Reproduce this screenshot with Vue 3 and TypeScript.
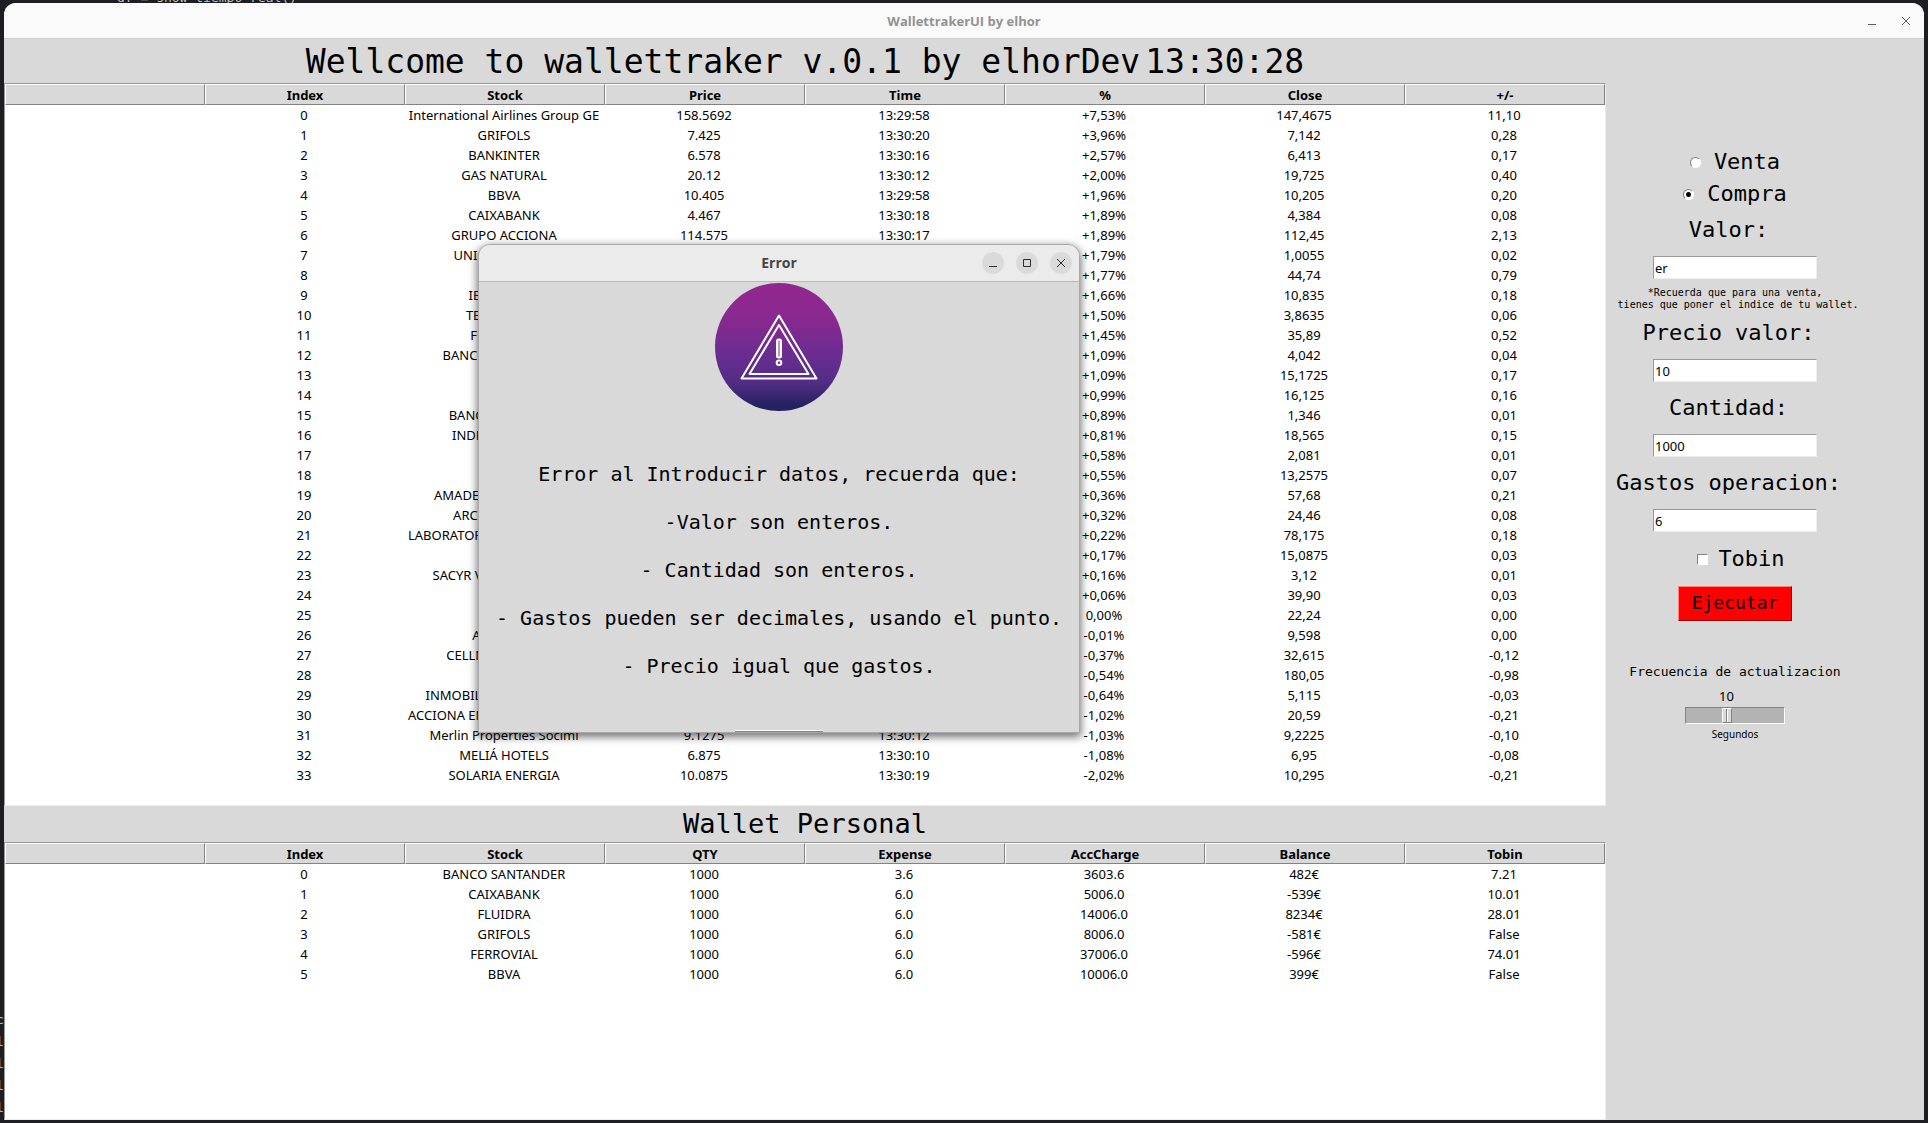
<script setup lang="ts">
import { ref } from 'vue'

const operation = ref<'venta' | 'compra'>('compra')
const stock = ref('er')
const price = ref('10')
const quantity = ref('1000')
const expenses = ref('6')
const tobin = ref(false)
const frequency = ref(10)

const marketColumns = ['', 'Index', 'Stock', 'Price', 'Time', '%', 'Close', '+/-']
const walletColumns = ['', 'Index', 'Stock', 'QTY', 'Expense', 'AccCharge', 'Balance', 'Tobin']

const market: string[][] = [
  ['International Airlines Group GE', '158.5692', '13:29:58', '+7,53%', '147,4675', '11,10'],
  ['GRIFOLS', '7.425', '13:30:20', '+3,96%', '7,142', '0,28'],
  ['BANKINTER', '6.578', '13:30:16', '+2,57%', '6,413', '0,17'],
  ['GAS NATURAL', '20.12', '13:30:12', '+2,00%', '19,725', '0,40'],
  ['BBVA', '10.405', '13:29:58', '+1,96%', '10,205', '0,20'],
  ['CAIXABANK', '4.467', '13:30:18', '+1,89%', '4,384', '0,08'],
  ['GRUPO ACCIONA', '114.575', '13:30:17', '+1,89%', '112,45', '2,13'],
  ['UNICAJA BANCO', '', '', '+1,79%', '1,0055', '0,02'],
  ['', '', '', '+1,77%', '44,74', '0,79'],
  ['IBERDROLA', '', '', '+1,66%', '10,835', '0,18'],
  ['TELEFONICA', '', '', '+1,50%', '3,8635', '0,06'],
  ['FERROVIAL', '', '', '+1,45%', '35,89', '0,52'],
  ['BANCO SANTANDER', '', '', '+1,09%', '4,042', '0,04'],
  ['', '', '', '+1,09%', '15,1725', '0,17'],
  ['', '', '', '+0,99%', '16,125', '0,16'],
  ['BANCO SABADELL', '', '', '+0,89%', '1,346', '0,01'],
  ['INDRA SISTEMAS', '', '', '+0,81%', '18,565', '0,15'],
  ['', '', '', '+0,58%', '2,081', '0,01'],
  ['', '', '', '+0,55%', '13,2575', '0,07'],
  ['AMADEUS IT HOLDING', '', '', '+0,36%', '57,68', '0,21'],
  ['ARCELORMITTAL', '', '', '+0,32%', '24,46', '0,08'],
  ['LABORATORIOS FARMACEUTICOS', '', '', '+0,22%', '78,175', '0,18'],
  ['', '', '', '+0,17%', '15,0875', '0,03'],
  ['SACYR VALLEHERMOSO', '', '', '+0,16%', '3,12', '0,01'],
  ['', '', '', '+0,06%', '39,90', '0,03'],
  ['FLUIDRA', '', '', '0,00%', '22,24', '0,00'],
  ['ACERINOX', '', '', '-0,01%', '9,598', '0,00'],
  ['CELLNEX TELECOM', '', '', '-0,37%', '32,615', '-0,12'],
  ['', '', '', '-0,54%', '180,05', '-0,98'],
  ['INMOBILIARIA COLONIAL', '', '', '-0,64%', '5,115', '-0,03'],
  ['ACCIONA ENERGIAS RENOVABLES', '', '', '-1,02%', '20,59', '-0,21'],
  ['Merlin Properties Socimi', '9.1275', '13:30:12', '-1,03%', '9,2225', '-0,10'],
  ['MELIÁ HOTELS', '6.875', '13:30:10', '-1,08%', '6,95', '-0,08'],
  ['SOLARIA ENERGIA', '10.0875', '13:30:19', '-2,02%', '10,295', '-0,21'],
]

const wallet: string[][] = [
  ['BANCO SANTANDER', '1000', '3.6', '3603.6', '482€', '7.21'],
  ['CAIXABANK', '1000', '6.0', '5006.0', '-539€', '10.01'],
  ['FLUIDRA', '1000', '6.0', '14006.0', '8234€', '28.01'],
  ['GRIFOLS', '1000', '6.0', '8006.0', '-581€', 'False'],
  ['FERROVIAL', '1000', '6.0', '37006.0', '-596€', '74.01'],
  ['BBVA', '1000', '6.0', '10006.0', '399€', 'False'],
]

const messages = [
  'Error al Introducir datos, recuerda que:',
  '-Valor son enteros.',
  '- Cantidad son enteros.',
  '- Gastos pueden ser decimales, usando el punto.',
  '- Precio igual que gastos.',
]
</script>

<template>
  <div class="desktop">
    <div class="editor-line" aria-hidden="true">df = show_tiempo_real()</div>
    <div class="terminal" aria-hidden="true">
      <span>c</span><span>l</span><span>l</span><span>l</span><span>l</span>
    </div>

    <div class="window">
      <header class="titlebar">
        <span class="title">WallettrakerUI by elhor</span>
        <div class="controls">
          <button type="button" aria-label="Minimizar">
            <svg width="10" height="10" viewBox="0 0 10 10"><path d="M1 8.5h8" /></svg>
          </button>
          <button type="button" aria-label="Cerrar">
            <svg width="10" height="10" viewBox="0 0 10 10"><path d="M1 1l8 8M9 1l-8 8" /></svg>
          </button>
        </div>
      </header>

      <div class="body">
        <main class="main">
          <h1 class="heading">
            <span>Wellcome to wallettraker v.0.1 by elhorDev</span>
            <time>13:30:28</time>
          </h1>

          <div class="tree market">
            <table>
              <thead>
                <tr><th v-for="c in marketColumns" :key="c">{{ c }}</th></tr>
              </thead>
              <tbody>
                <tr v-for="(row, i) in market" :key="i">
                  <td></td>
                  <td>{{ i }}</td>
                  <td v-for="(cell, j) in row" :key="j">{{ cell }}</td>
                </tr>
              </tbody>
            </table>
          </div>

          <h2 class="subheading">Wallet Personal</h2>

          <div class="tree wallet">
            <table>
              <thead>
                <tr><th v-for="c in walletColumns" :key="c">{{ c }}</th></tr>
              </thead>
              <tbody>
                <tr v-for="(row, i) in wallet" :key="i">
                  <td></td>
                  <td>{{ i }}</td>
                  <td v-for="(cell, j) in row" :key="j">{{ cell }}</td>
                </tr>
              </tbody>
            </table>
          </div>
        </main>

        <aside class="side">
          <form class="form" @submit.prevent>
            <label class="option"><input v-model="operation" type="radio" value="venta" />Venta</label>
            <label class="option"><input v-model="operation" type="radio" value="compra" />Compra</label>

            <div class="field">
              <label for="stock">Valor:</label>
              <input id="stock" v-model="stock" type="text" />
            </div>
            <p class="note">*Recuerda que para una venta,<br />&nbsp;tienes que poner el indice de tu wallet.</p>
            <div class="field">
              <label for="price">Precio valor:</label>
              <input id="price" v-model="price" type="text" />
            </div>
            <div class="field">
              <label for="quantity">Cantidad:</label>
              <input id="quantity" v-model="quantity" type="text" />
            </div>
            <div class="field">
              <label for="expenses">Gastos operacion:</label>
              <input id="expenses" v-model="expenses" type="text" />
            </div>

            <label class="option check"><input v-model="tobin" type="checkbox" />Tobin</label>
            <button class="run" type="submit">Ejecutar</button>

            <label class="frequency" for="frequency">Frecuencia de actualizacion</label>
            <div class="scale">
              <output for="frequency">{{ frequency }}</output>
              <input id="frequency" v-model.number="frequency" type="range" min="0" max="25" />
            </div>
            <span class="unit">Segundos</span>
          </form>
        </aside>
      </div>
    </div>

    <section class="dialog" role="dialog" aria-labelledby="dialog-title">
      <header class="dialog-bar">
        <span id="dialog-title" class="title">Error</span>
        <div class="controls">
          <button type="button" aria-label="Minimizar">
            <svg width="10" height="10" viewBox="0 0 10 10"><path d="M1 8.5h8" /></svg>
          </button>
          <button type="button" aria-label="Maximizar">
            <svg width="10" height="10" viewBox="0 0 10 10"><path d="M1.5 1.5h7v7h-7z" /></svg>
          </button>
          <button type="button" aria-label="Cerrar">
            <svg width="10" height="10" viewBox="0 0 10 10"><path d="M1 1l8 8M9 1l-8 8" /></svg>
          </button>
        </div>
      </header>
      <div class="dialog-body">
        <svg class="warning" width="128" height="128" viewBox="0 0 128 128" aria-hidden="true">
          <defs>
            <linearGradient id="warning-fill" x1="0" y1="0" x2="0" y2="1">
              <stop offset="0" stop-color="#93278f" />
              <stop offset="0.28" stop-color="#88298f" />
              <stop offset="0.6" stop-color="#662d91" />
              <stop offset="0.78" stop-color="#522c84" />
              <stop offset="0.95" stop-color="#262262" />
              <stop offset="1" stop-color="#262262" />
            </linearGradient>
          </defs>
          <circle cx="64" cy="64" r="64" fill="url(#warning-fill)" />
          <g fill="none" stroke="#fff" stroke-width="2" stroke-linejoin="round">
            <path d="M64 32.500L26.500 95.500h75z" />
            <path d="M64 42L34.500 91h59z" />
            <rect x="62" y="56.500" width="4" height="18" rx="1.500" fill="#b99acb" />
            <circle cx="64" cy="79.800" r="2.300" />
          </g>
        </svg>
        <div class="messages">
          <p v-for="m in messages" :key="m">{{ m }}</p>
        </div>
        <button class="accept" type="button" aria-label="Aceptar"></button>
      </div>
    </section>
  </div>
</template>

<style>
body {
  margin: 0;
  background: #1d1e21;
}
</style>

<style scoped>
* {
  box-sizing: border-box;
}

.desktop {
  position: relative;
  display: flex;
  min-height: 100vh;
  padding: 3px 4px;
  overflow: hidden;
  background: #1d1e21;
  font-family: 'Noto Sans', sans-serif;
  font-size: 13px;
  color: #000;
}

.editor-line {
  position: absolute;
  top: -9px;
  left: 117px;
  font: 13px/14px 'DejaVu Sans Mono', monospace;
  color: #bfc3c9;
}

.terminal {
  position: absolute;
  bottom: 4px;
  left: -4px;
  display: flex;
  flex-direction: column;
  font: 13px/22px 'DejaVu Sans Mono', monospace;
  color: #c9c0a8;
}

.window {
  position: relative;
  display: flex;
  flex: 1;
  flex-direction: column;
  overflow: hidden;
  border-radius: 12px 12px 0 0;
  background: #d9d9d9;
}

.titlebar,
.dialog-bar {
  display: flex;
  align-items: center;
  justify-content: center;
  position: relative;
  font-family: 'Open Sans', sans-serif;
  font-weight: 700;
}

.titlebar {
  height: 36px;
  border-bottom: 1px solid #d0d0d0;
  background: #fafafa;
  font-size: 13px;
  color: #929292;
}

.controls {
  position: absolute;
  right: 7px;
  display: flex;
  gap: 12px;
}

.controls button {
  display: grid;
  place-items: center;
  width: 22px;
  height: 22px;
  padding: 0;
  border: 0;
  border-radius: 50%;
  background: none;
}

.controls svg {
  fill: none;
  stroke: #5c5c5c;
  stroke-width: 1;
}

.body {
  display: flex;
  flex: 1;
}

.main {
  display: flex;
  flex: 1;
  flex-direction: column;
  min-width: 0;
}

.heading {
  display: flex;
  justify-content: center;
  gap: 5px;
  margin: 0;
  padding-top: 2px;
  font: 33px/42px 'DejaVu Sans Mono', monospace;
  white-space: nowrap;
}

.subheading {
  margin: 0;
  font: 27px/36px 'DejaVu Sans Mono', monospace;
  text-align: center;
}

.tree {
  border: 1px solid;
  border-color: #999 #ededed #ededed #999;
  background: #fff;
}

.market {
  padding-bottom: 20px;
}

.wallet {
  flex: 1;
}

table {
  width: 100%;
  border-collapse: separate;
  border-spacing: 0;
  table-layout: fixed;
}

th,
td {
  overflow: hidden;
  text-align: center;
  white-space: nowrap;
}

th {
  height: 21px;
  padding: 2px 4px 0;
  border: 1px solid;
  border-color: #fff #828282 #828282 #fff;
  background: #d9d9d9;
  line-height: 17px;
}

td {
  height: 20px;
  padding: 0 5px 0 3px;
  line-height: 20px;
}

.side {
  width: 318px;
}

.form {
  display: flex;
  flex-direction: column;
  align-items: center;
  width: 258px;
  padding-top: 107px;
  font: 22px/32px 'DejaVu Sans Mono', monospace;
  white-space: nowrap;
}

.option {
  display: flex;
  align-items: center;
  gap: 13px;
}

.option input {
  appearance: none;
  display: grid;
  place-items: center;
  width: 11px;
  height: 11px;
  margin: 0;
  border: 1px solid;
  border-color: #828282 #fff #fff #828282;
  background: #fff;
}

.option input[type='radio'] {
  border-radius: 50%;
}

.option input[type='radio']:checked::before {
  content: '';
  width: 5px;
  height: 5px;
  border-radius: 50%;
  background: #000;
}

.check {
  gap: 10px;
  margin-top: 11px;
  padding-left: 12px;
}

.field {
  display: flex;
  flex-direction: column;
  align-items: center;
  gap: 10px;
  padding-top: 1px;
}

.option + .field {
  margin-top: 3px;
}

.field + .field {
  margin-top: 9px;
}

.field label {
  padding-right: 13px;
}

.field input {
  width: 164px;
  height: 23px;
  padding: 0 1px;
  border: 1px solid;
  border-color: #999 #ededed #ededed #999;
  outline: 0;
  background: #fff;
  font: 13px/18px 'Noto Sans', sans-serif;
  color: #000;
}

.note {
  margin: 8px 0 5px;
  font-size: 10px;
  line-height: 12px;
  text-align: center;
}

.run {
  width: 114px;
  height: 35px;
  margin-top: 11px;
  padding: 0 0 2px;
  border: 1px solid;
  border-color: #ff7f7f #990000 #990000 #ff7f7f;
  background: #f00;
  font: 18px/30px 'DejaVu Sans Mono', monospace;
  color: #000;
}

.frequency {
  margin-top: 41px;
  font-size: 13px;
  line-height: 20px;
}

.scale {
  display: flex;
  flex-direction: column;
  gap: 1px;
  width: 100px;
  margin-top: 4px;
  font: 13px/20px 'Noto Sans', sans-serif;
}

.scale output {
  padding-left: 34px;
}

.scale input {
  appearance: none;
  width: 100px;
  height: 17px;
  margin: 0;
  padding-left: 1px;
  border: 1px solid;
  border-color: #828282 #fff #fff #828282;
  background: #b3b3b3;
}

.scale input::-webkit-slider-thumb {
  appearance: none;
  width: 10px;
  height: 15px;
  border: 1px solid;
  border-color: #fff #828282 #828282 #fff;
  background: linear-gradient(90deg, #d9d9d9 3px, #828282 3px 4px, #fff 4px 5px, #d9d9d9 5px);
}

.unit {
  margin-top: 1px;
  font: 10px/18px 'Noto Sans', sans-serif;
}

.dialog {
  position: absolute;
  top: 244px;
  left: 478px;
  display: flex;
  flex-direction: column;
  width: 602px;
  height: 489px;
  overflow: hidden;
  border: 1px solid #a8a8a8;
  border-radius: 12px 12px 0 0;
  background: #d9d9d9;
  box-shadow: 0 3px 8px 1px rgba(0, 0, 0, 0.55);
}

.dialog-bar {
  height: 37px;
  padding-bottom: 1px;
  border-bottom: 1px solid #bababa;
  background: #ebebeb;
  font-size: 14px;
  color: #454545;
}

.dialog-bar .controls button {
  background: #dadada;
}

.dialog-bar .controls svg {
  stroke: #2e2e2e;
}

.dialog-body {
  display: flex;
  flex: 1;
  flex-direction: column;
  align-items: center;
  padding-top: 1px;
}

.messages {
  display: flex;
  flex-direction: column;
  gap: 24px;
  margin-top: 51px;
  font: 20px/24px 'DejaVu Sans Mono', monospace;
  text-align: center;
  white-space: nowrap;
}

.messages p {
  margin: 0;
}

.accept {
  width: 88px;
  height: 2px;
  margin-top: auto;
  padding: 0;
  border: 0;
  border-top: 1px solid #fff;
  background: #828282;
}
</style>
